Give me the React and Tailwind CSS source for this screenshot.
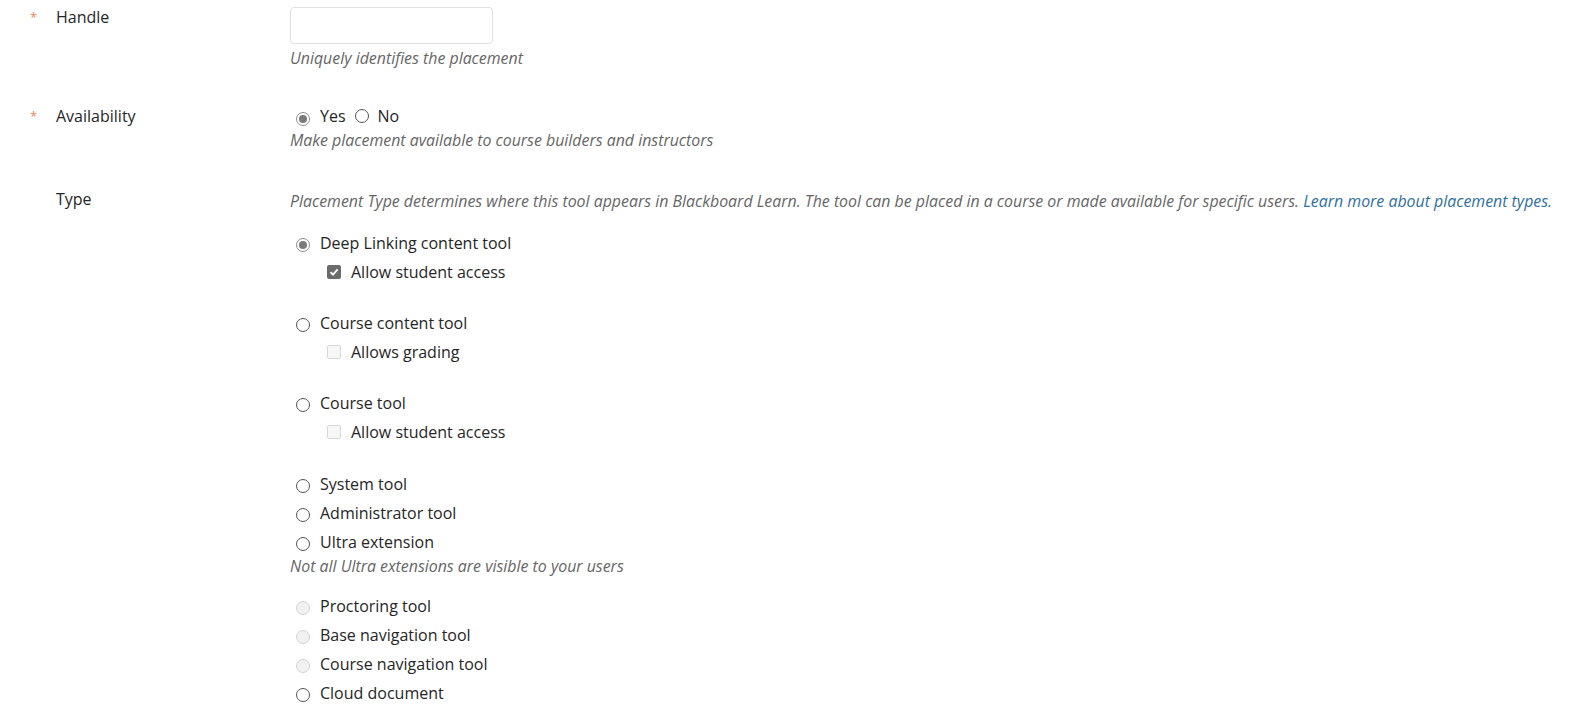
import React, { useState } from "react";

const Radio = ({ checked, disabled }) => {
  if (disabled) {
    return (
      <span className="mt-[5px] inline-block h-[14px] w-[14px] shrink-0 rounded-full border border-[#d4d4d4] bg-[#f1f1f1]" />
    );
  }
  return (
    <span
      className={
        checked
          ? "mt-[5px] flex h-[14px] w-[14px] shrink-0 items-center justify-center rounded-full border border-[#8f8f8f] bg-white"
          : "mt-[5px] inline-block h-[14px] w-[14px] shrink-0 rounded-full border border-[#555555] bg-white"
      }
    >
      {checked && <span className="h-[8px] w-[8px] rounded-full bg-[#7a7a7a]" />}
    </span>
  );
};

const Checkbox = ({ checked }) =>
  checked ? (
    <span className="flex h-[14px] w-[14px] shrink-0 items-center justify-center rounded-[2px] bg-[#6b6b6b]">
      <svg width="10" height="10" viewBox="0 0 10 10">
        <path d="M1.5 5.2 L4 7.6 L8.6 2.4" fill="none" stroke="#fff" strokeWidth="1.8" />
      </svg>
    </span>
  ) : (
    <span className="inline-block h-[14px] w-[14px] shrink-0 rounded-[2px] border border-[#d6d6d6] bg-[#f7f7f7]" />
  );

const Option = ({ label, checked, disabled }) => (
  <div className="flex h-[29px] items-center gap-[10px] pl-[6px]">
    <Radio checked={checked} disabled={disabled} />
    <span>{label}</span>
  </div>
);

const SubOption = ({ label, checked }) => (
  <div className="flex h-[30px] items-center gap-[10px] pl-[37px]">
    <Checkbox checked={checked} />
    <span>{label}</span>
  </div>
);

const Label = ({ text, required, className }) => (
  <div className={"flex w-[290px] shrink-0 pl-[30px] " + className}>
    <span className="w-[26px] text-[13px] text-[#f0845a]">{required ? "*" : ""}</span>
    <span>{text}</span>
  </div>
);

const Hint = ({ children, className }) => (
  <p className={"text-[15.9px] italic text-[#666666] " + className}>{children}</p>
);

export default function App() {
  const [handle, setHandle] = useState("");

  return (
    <div
      className="min-h-screen bg-white text-[16px] text-[#262626]"
      style={{ fontFamily: "'Open Sans', 'Liberation Sans', sans-serif" }}
    >
      <div className="flex">
        <Label text="Handle" required className="pt-[6px] leading-[22px]" />
        <div>
          <input
            value={handle}
            onChange={(e) => setHandle(e.target.value)}
            className="mt-[7px] h-[37px] w-[203px] rounded-[4px] border border-[#e0e0e0] bg-white px-2 outline-none"
          />
          <Hint className="mt-[4px] leading-[20px]">Uniquely identifies the placement</Hint>
        </div>
      </div>

      <div className="mt-[36px] flex">
        <Label text="Availability" required className="leading-[24px]" />
        <div>
          <div className="flex h-[24px] items-center pl-[6px]">
            <Radio checked />
            <span className="ml-[10px]">Yes</span>
            <span className="ml-[9px]">
              <Radio />
            </span>
            <span className="ml-[9px]">No</span>
          </div>
          <Hint className="leading-[24px]">Make placement available to course builders and instructors</Hint>
        </div>
      </div>

      <div className="mt-[37px] flex">
        <Label text="Type" className="leading-[20px]" />
        <div>
          <Hint className="leading-[24px]">
            Placement Type determines where this tool appears in Blackboard Learn. The tool can be placed in a course or
            made available for specific users.{" "}
            <a href="#" className="text-[#2f6f9c]">
              Learn more about placement types.
            </a>
          </Hint>

          <div className="mt-[15px]">
            <Option label="Deep Linking content tool" checked />
            <SubOption label="Allow student access" checked />
          </div>
          <div className="mt-[21px]">
            <Option label="Course content tool" />
            <SubOption label="Allows grading" />
          </div>
          <div className="mt-[21px]">
            <Option label="Course tool" />
            <SubOption label="Allow student access" />
          </div>
          <div className="mt-[22px]">
            <Option label="System tool" />
            <Option label="Administrator tool" />
            <Option label="Ultra extension" />
          </div>
          <Hint className="leading-[20px]">Not all Ultra extensions are visible to your users</Hint>
          <div className="mt-[15px]">
            <Option label="Proctoring tool" disabled />
            <Option label="Base navigation tool" disabled />
            <Option label="Course navigation tool" disabled />
            <Option label="Cloud document" />
          </div>
        </div>
      </div>
    </div>
  );
}
